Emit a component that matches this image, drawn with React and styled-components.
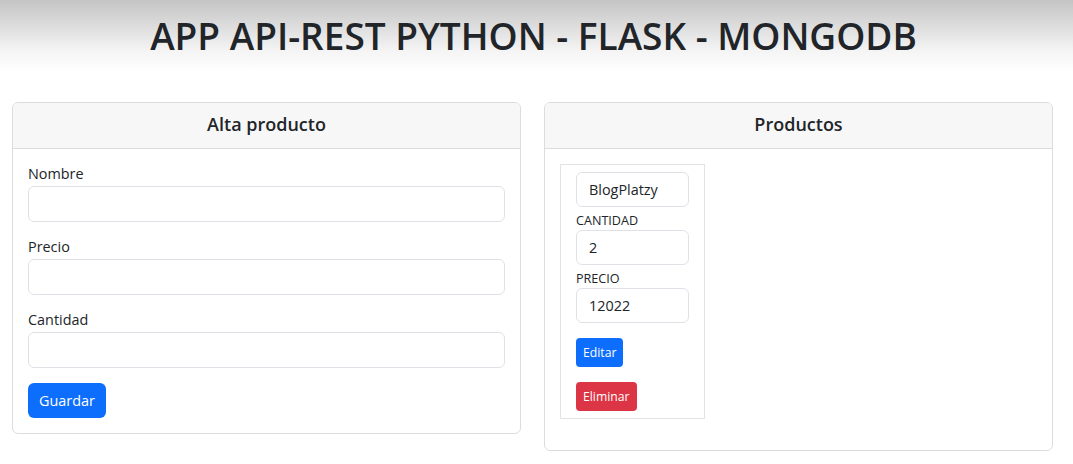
import React from "react";
import styled, { createGlobalStyle } from "styled-components";

const GlobalStyle = createGlobalStyle`
  body {
    margin: 0;
    background: #fff;
    color: #212529;
    font-family: "Segoe UI", "Open Sans", sans-serif;
  }
  * { box-sizing: border-box; }
`;

const Header = styled.header`
  height: 72px;
  padding-right: 6px;
  background: linear-gradient(#c4c4c4 0%, #f4f4f4 70%, #fff 100%);
  display: flex;
  justify-content: center;
  align-items: flex-start;
`;

const Title = styled.h1`
  margin: 14px 0 0;
  font-size: 37px;
  font-weight: 600;
  line-height: 1.2;
  color: #212529;
`;

const Row = styled.div`
  display: flex;
  align-items: flex-start;
  gap: 23px;
  padding: 30px 20px 0 12px;
`;

const Card = styled.section`
  flex: 1;
  border: 1px solid #dcdcdc;
  border-radius: 6px;
  overflow: hidden;
`;

const CardHeader = styled.div`
  height: 46px;
  padding-bottom: 4px;
  display: flex;
  align-items: center;
  justify-content: center;
  background: #f7f7f7;
  border-bottom: 1px solid #dcdcdc;
`;

const CardTitle = styled.h5`
  margin: 0;
  font-size: 18px;
  font-weight: 600;
`;

const CardBody = styled.div`
  padding: ${p => p.$pad || "15px 15px 15px"};
`;

const Group = styled.div`
  margin-bottom: 15px;
`;

const Label = styled.label`
  display: block;
  font-size: 14.4px;
  line-height: 20px;
  margin-bottom: 2px;
`;

const Input = styled.input`
  display: block;
  width: ${p => p.$w || "100%"};
  height: ${p => p.$h || "36px"};
  padding: 0 12px;
  font: inherit;
  font-size: 14.4px;
  color: #212529;
  border: 1px solid #dee2e6;
  border-radius: 6px;
  outline: none;
`;

const Button = styled.button`
  display: block;
  border: none;
  border-radius: ${p => (p.$small ? "4px" : "6px")};
  background: ${p => (p.$danger ? "#dc3545" : "#0d6efd")};
  color: #fff;
  font: inherit;
  font-size: ${p => (p.$small ? "12.2px" : "14.4px")};
  height: ${p => (p.$small ? "29px" : "35px")};
  padding: ${p => (p.$small ? "0 7px" : "0 11px")};
  margin-top: ${p => p.$mt || "0"};
`;

const ProductBox = styled.div`
  width: 145px;
  border: 1px solid #e3e3e3;
  padding: 7px 15px 7px 15px;
`;

const SmallLabel = styled.div`
  font-size: 12.6px;
  line-height: 17px;
  margin: 5px 0 1px;
`;

export default function App() {
  return (
    <>
      <GlobalStyle />
      <Header>
        <Title>APP API-REST PYTHON - FLASK - MONGODB</Title>
      </Header>
      <Row>
        <Card>
          <CardHeader>
            <CardTitle>Alta producto</CardTitle>
          </CardHeader>
          <CardBody>
            <Group>
              <Label>Nombre</Label>
              <Input />
            </Group>
            <Group>
              <Label>Precio</Label>
              <Input />
            </Group>
            <Group>
              <Label>Cantidad</Label>
              <Input />
            </Group>
            <Button>Guardar</Button>
          </CardBody>
        </Card>
        <Card>
          <CardHeader>
            <CardTitle>Productos</CardTitle>
          </CardHeader>
          <CardBody $pad="15px 15px 31px">
            <ProductBox>
              <Input $w="113px" $h="35px" defaultValue="BlogPlatzy" />
              <SmallLabel>CANTIDAD</SmallLabel>
              <Input $w="113px" $h="35px" defaultValue="2" />
              <SmallLabel>PRECIO</SmallLabel>
              <Input $w="113px" $h="35px" defaultValue="12022" />
              <Button $small $mt="15px">Editar</Button>
              <Button $small $danger $mt="15px">Eliminar</Button>
            </ProductBox>
          </CardBody>
        </Card>
      </Row>
    </>
  );
}
